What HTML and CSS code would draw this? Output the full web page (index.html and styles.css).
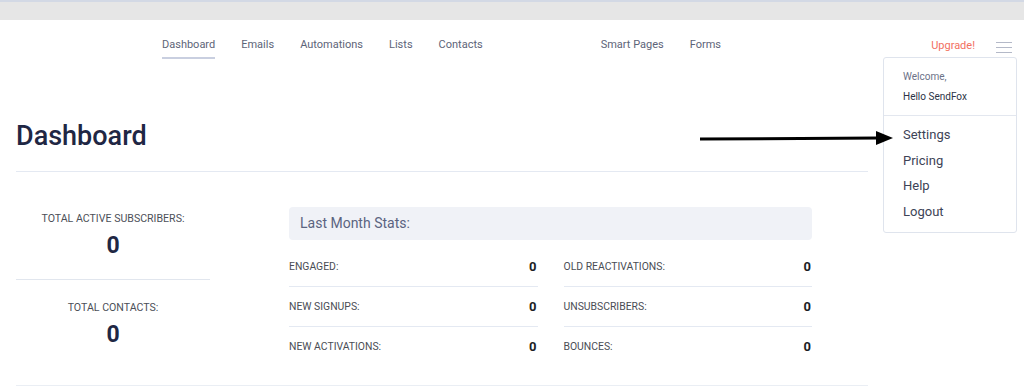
FILE: index.html
```html
<!DOCTYPE html>
<html lang="en">
<head>
    <meta charset="UTF-8">
    <meta name="viewport" content="width=device-width, initial-scale=1.0">
    <title>Dashboard - SendFox</title>
    <link rel="stylesheet" href="styles.css">
</head>
<body>

    <div class="browser-bar"></div>

    <header class="topnav">
        <nav class="nav-main">
            <a class="nav-link active" href="#">Dashboard</a>
            <a class="nav-link" href="#">Emails</a>
            <a class="nav-link" href="#">Automations</a>
            <a class="nav-link" href="#">Lists</a>
            <a class="nav-link" href="#">Contacts</a>
        </nav>
        <nav class="nav-extra">
            <a class="nav-link" href="#">Smart Pages</a>
            <a class="nav-link" href="#">Forms</a>
        </nav>
        <div class="nav-right">
            <a class="upgrade" href="#">Upgrade!</a>
            <button class="burger" aria-label="Menu">
                <span></span><span></span><span></span>
            </button>
        </div>
    </header>

    <div class="user-menu">
        <div class="user-head">
            <div class="welcome">Welcome,</div>
            <div class="hello">Hello SendFox</div>
        </div>
        <ul class="menu-list">
            <li><a href="#">Settings</a></li>
            <li><a href="#">Pricing</a></li>
            <li><a href="#">Help</a></li>
            <li><a href="#">Logout</a></li>
        </ul>
    </div>

    <svg class="pointer-arrow" width="196" height="20" viewBox="0 0 196 20">
        <line x1="0" y1="10" x2="178" y2="9" stroke="#000" stroke-width="3"/>
        <polygon points="176,2 193,9 176,16" fill="#000"/>
    </svg>

    <main class="page">
        <h1 class="page-title">Dashboard</h1>

        <div class="dash">
            <div class="totals">
                <div class="total">
                    <div class="total-label">Total active subscribers:</div>
                    <div class="total-value">0</div>
                </div>
                <div class="total">
                    <div class="total-label">Total contacts:</div>
                    <div class="total-value">0</div>
                </div>
            </div>

            <section class="stats">
                <div class="stats-head">Last Month Stats:</div>
                <div class="stats-grid">
                    <ul class="stat-col">
                        <li><span>Engaged:</span><b>0</b></li>
                        <li><span>New signups:</span><b>0</b></li>
                        <li><span>New activations:</span><b>0</b></li>
                    </ul>
                    <ul class="stat-col">
                        <li><span>Old reactivations:</span><b>0</b></li>
                        <li><span>Unsubscribers:</span><b>0</b></li>
                        <li><span>Bounces:</span><b>0</b></li>
                    </ul>
                </div>
            </section>
        </div>

        <div class="page-foot"></div>
    </main>

</body>
</html>
```

FILE: styles.css
```css
body {
    margin: 0;
    font-family: Roboto, "Liberation Sans", Arial, sans-serif;
    background: #fff;
    color: #1f2744;
    height: 386px;
    overflow: hidden;
    position: relative;
}

a {
    text-decoration: none;
}

.browser-bar {
    height: 18px;
    background: #e6e6e6;
    border-top: 2px solid #d3d9e5;
}

/* top navigation */
.topnav {
    display: flex;
    align-items: center;
    height: 51px;
    padding: 0 12px 0 162px;
}

.nav-main,
.nav-extra {
    display: flex;
    gap: 26px;
}

.nav-extra {
    margin-left: 118px;
}

.nav-link {
    font-size: 11px;
    color: #5d6478;
    padding: 6px 0;
    border-bottom: 2px solid transparent;
}

.nav-link.active {
    border-bottom-color: #c9cfe0;
}

.nav-right {
    margin-left: auto;
    display: flex;
    align-items: center;
    gap: 21px;
}

.upgrade {
    font-size: 11px;
    color: #f2705f;
}

.burger {
    display: flex;
    flex-direction: column;
    gap: 4px;
    width: 16px;
    margin-top: 3px;
    padding: 0;
    border: none;
    background: none;
}

.burger span {
    height: 1px;
    background: #b4b9c8;
}

/* dropdown */
.user-menu {
    position: absolute;
    top: 57px;
    right: 7px;
    width: 132px;
    border: 1px solid #dfe4ed;
    border-radius: 3px;
    background: #fff;
}

.user-head {
    padding: 13px 19px 13px;
    border-bottom: 1px solid #e3e7ef;
}

.welcome {
    font-size: 10px;
    color: #6b7287;
    margin-bottom: 9px;
}

.hello {
    font-size: 10px;
    color: #2c3246;
}

.menu-list {
    list-style: none;
    margin: 0;
    padding: 6px 19px 7px;
}

.menu-list a {
    display: block;
    font-size: 13px;
    line-height: 25.7px;
    color: #3d4356;
}

.pointer-arrow {
    position: absolute;
    left: 700px;
    top: 129px;
}

/* page */
.page {
    width: 852px;
    margin-left: 16px;
}

.page-title {
    margin: 0;
    padding: 49px 0 19px;
    font-size: 27px;
    font-weight: 500;
    line-height: 32px;
    border-bottom: 1px solid #e4e9f2;
}

.dash {
    display: flex;
    padding-top: 35px;
}

.totals {
    width: 194px;
}

.total {
    text-align: center;
    padding-top: 5px;
}

.total:first-child {
    border-bottom: 1px solid #e1e6ee;
    padding-bottom: 19px;
    margin-bottom: 16px;
}

.total-label {
    font-size: 10.6px;
    text-transform: uppercase;
    color: #4c4f58;
    margin-bottom: 7px;
}

.total-value {
    font-size: 23px;
    font-weight: 700;
    line-height: 28px;
    color: #1f2744;
}

.stats {
    width: 523px;
    margin-left: 79px;
}

.stats-head {
    background: #f0f2f7;
    border-radius: 4px;
    padding: 8px 11px;
    font-size: 14px;
    line-height: 17px;
    color: #5b6480;
}

.stats-grid {
    display: grid;
    grid-template-columns: 1fr 1fr;
    gap: 26px;
    margin-top: 7px;
}

.stat-col {
    list-style: none;
    margin: 0;
    padding: 0;
}

.stat-col li {
    display: flex;
    justify-content: space-between;
    align-items: center;
    height: 39px;
    border-bottom: 1px solid #e4e9f2;
}

.stat-col li:last-child {
    border-bottom: none;
}

.stat-col span {
    font-size: 10.4px;
    text-transform: uppercase;
    color: #4a4d55;
}

.stat-col b {
    font-size: 13px;
    color: #1b1d24;
    padding-right: 1px;
}

.page-foot {
    margin-top: 19px;
    border-top: 1px solid #eaeef4;
}
```
